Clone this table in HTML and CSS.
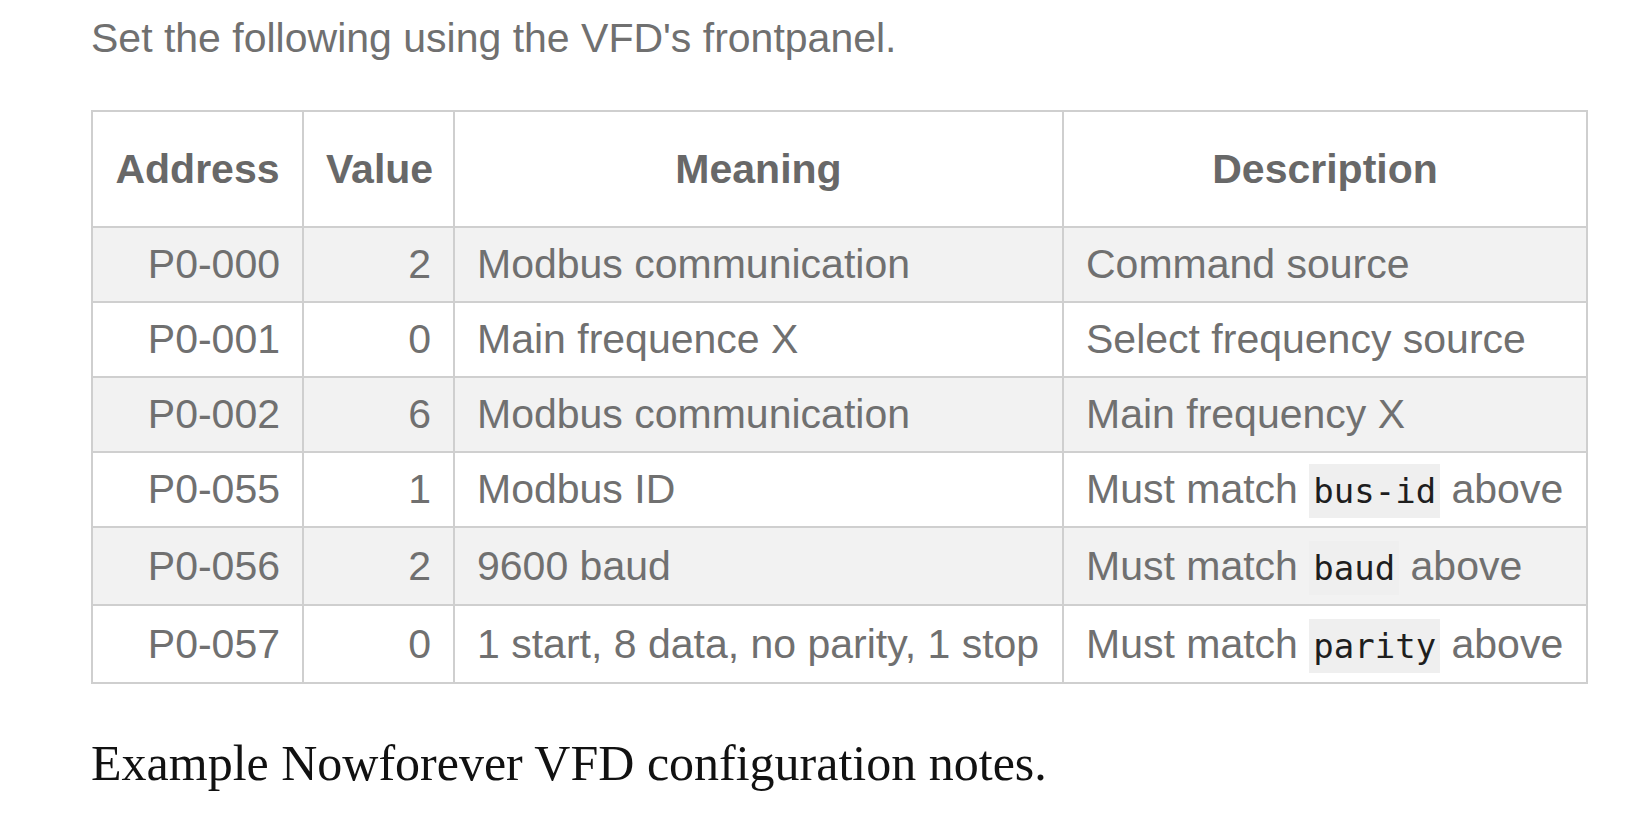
FILE: index.html
```html
<!DOCTYPE html>
<html lang="en">
<head>
<meta charset="utf-8">
<title>Nowforever VFD configuration</title>
<link rel="stylesheet" href="styles.css">
</head>
<body>
<main class="page">
  <p class="intro">Set the following using the VFD's frontpanel.</p>
  <table class="params">
    <colgroup>
      <col class="c-addr">
      <col class="c-val">
      <col class="c-mean">
      <col class="c-desc">
    </colgroup>
    <thead>
      <tr>
        <th>Address</th>
        <th>Value</th>
        <th>Meaning</th>
        <th>Description</th>
      </tr>
    </thead>
    <tbody>
      <tr>
        <td class="num">P0-000</td>
        <td class="num">2</td>
        <td>Modbus communication</td>
        <td>Command source</td>
      </tr>
      <tr>
        <td class="num">P0-001</td>
        <td class="num">0</td>
        <td>Main frequence X</td>
        <td>Select frequency source</td>
      </tr>
      <tr>
        <td class="num">P0-002</td>
        <td class="num">6</td>
        <td>Modbus communication</td>
        <td>Main frequency X</td>
      </tr>
      <tr>
        <td class="num">P0-055</td>
        <td class="num">1</td>
        <td>Modbus ID</td>
        <td>Must match <code>bus-id</code> above</td>
      </tr>
      <tr>
        <td class="num">P0-056</td>
        <td class="num">2</td>
        <td>9600 baud</td>
        <td>Must match <code>baud</code> above</td>
      </tr>
      <tr>
        <td class="num">P0-057</td>
        <td class="num">0</td>
        <td>1 start, 8 data, no parity, 1 stop</td>
        <td>Must match <code>parity</code> above</td>
      </tr>
    </tbody>
  </table>
  <p class="caption">Example Nowforever VFD configuration notes.</p>
</main>
</body>
</html>
```

FILE: styles.css
```css
html, body {
  margin: 0;
  padding: 0;
  background: #ffffff;
}

.page {
  padding: 15px 0 0 91px;
}

.intro {
  margin: 0 0 48px 0;
  font-family: "Liberation Sans", Arial, sans-serif;
  font-size: 41px;
  color: #707070;
}

.params {
  border-collapse: collapse;
  width: 1497px;
  table-layout: fixed;
  font-family: "Liberation Sans", Arial, sans-serif;
  font-size: 41px;
  color: #707070;
  border: 2px solid #c6c6c6;
}

.c-addr { width: 211px; }
.c-val { width: 151px; }
.c-mean { width: 609px; }
.c-desc { width: 524px; }

.params th,
.params td {
  border: 2px solid #cfcfcf;
  padding: 0 22px;
  white-space: nowrap;
}

.params th {
  height: 114px;
  font-weight: bold;
  font-size: 41px;
  color: #686868;
  text-align: center;
  background: #ffffff;
}

.params td {
  height: 73px;
  text-align: left;
}

.params td.num {
  text-align: right;
}

.params tbody tr:nth-child(odd) td {
  background: #f2f2f2;
}

.params tbody tr:nth-child(5) td,
.params tbody tr:nth-child(6) td {
  height: 76px;
}

.params code {
  font-family: "DejaVu Sans Mono", "Liberation Mono", monospace;
  font-size: 34px;
  color: #1e1e1e;
  background: #efefef;
  padding: 7px 4px;
}

.caption {
  margin: 50px 0 0 0;
  font-family: "Liberation Serif", Georgia, serif;
  font-size: 50px;
  color: #111111;
}
```
